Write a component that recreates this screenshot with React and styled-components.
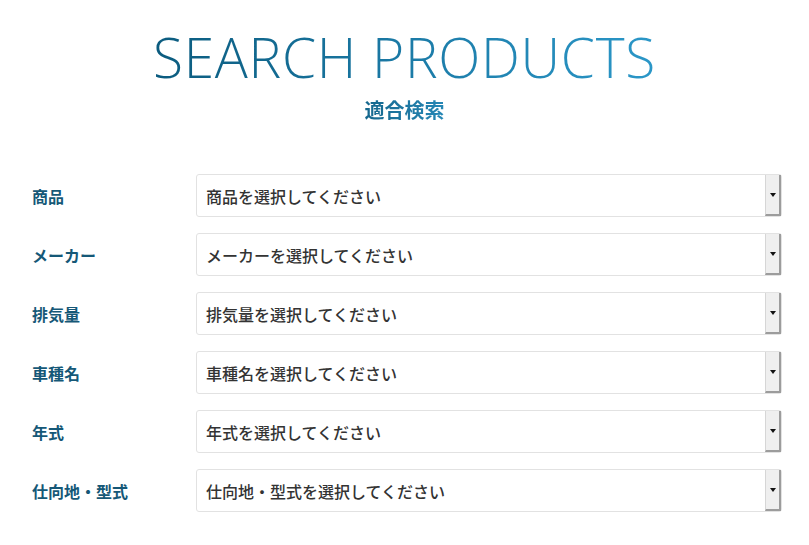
import React from "react";
import styled, { createGlobalStyle } from "styled-components";

const GlobalStyle = createGlobalStyle`
  body {
    margin: 0;
    background: #fff;
    font-family: "Noto Sans CJK JP", "Noto Sans", sans-serif;
  }
`;

const Page = styled.div`
  width: 809px;
  height: 545px;
  box-sizing: border-box;
  padding: 25px 27px 0 32px;
  display: flex;
  flex-direction: column;
`;

const Header = styled.div`
  display: flex;
  flex-direction: column;
  align-items: center;
  margin-left: -32px;
  margin-right: -27px;
`;

const Title = styled.h1`
  margin: 0;
  font-family: "Open Sans", sans-serif;
  font-weight: 300;
  font-size: 55px;
  line-height: 64px;
  letter-spacing: 0.7px;
  background: linear-gradient(90deg, #0b5b7e 0%, #1b7aa6 50%, #2b97c8 100%);
  -webkit-background-clip: text;
  background-clip: text;
  color: transparent;
`;

const Subtitle = styled.h2`
  margin: 7px 0 0;
  font-size: 20px;
  font-weight: 700;
  line-height: 28px;
  background: linear-gradient(90deg, #15678d, #2687b6);
  -webkit-background-clip: text;
  background-clip: text;
  color: transparent;
`;

const Form = styled.div`
  margin-top: 50px;
  display: flex;
  flex-direction: column;
  gap: 16px;
`;

const Row = styled.div`
  display: flex;
  align-items: center;
  height: 43px;
`;

const Label = styled.div`
  width: 164px;
  font-size: 16px;
  font-weight: 700;
  color: #155877;
`;

const Select = styled.div`
  flex: 1;
  height: 43px;
  display: flex;
  box-sizing: border-box;
  border: 1px solid #e2e2e2;
  border-radius: 3px;
  background: #fff;
`;

const Value = styled.div`
  flex: 1;
  display: flex;
  align-items: center;
  padding-left: 9px;
  font-size: 16px;
  font-weight: 500;
  color: #333;
`;

const Arrow = styled.div`
  width: 16px;
  box-sizing: border-box;
  background: #efefef;
  border-left: 1px solid #d6d6d6;
  border-right: 2px solid #9c9c9c;
  border-bottom: 2px solid #9c9c9c;
  display: flex;
  align-items: center;
  justify-content: center;

  &::after {
    content: "";
    border-left: 3px solid transparent;
    border-right: 3px solid transparent;
    border-top: 4px solid #111;
  }
`;

const fields = [
  "商品",
  "メーカー",
  "排気量",
  "車種名",
  "年式",
  "仕向地・型式",
];

export default function App() {
  return (
    <Page>
      <GlobalStyle />
      <Header>
        <Title>SEARCH PRODUCTS</Title>
        <Subtitle>適合検索</Subtitle>
      </Header>
      <Form>
        {fields.map((f) => (
          <Row key={f}>
            <Label>{f}</Label>
            <Select>
              <Value>{f}を選択してください</Value>
              <Arrow />
            </Select>
          </Row>
        ))}
      </Form>
    </Page>
  );
}
